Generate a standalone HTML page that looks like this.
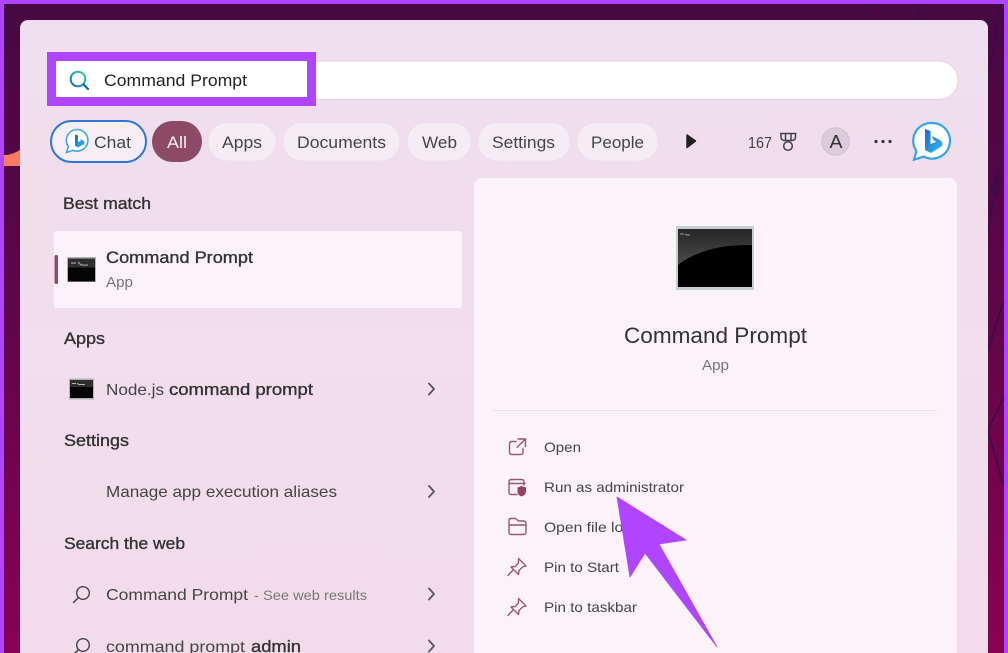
<!DOCTYPE html>
<html><head><meta charset="utf-8"><style>
html,body{margin:0;padding:0;background:#000}
svg{display:block}
text{font-family:"Liberation Sans",sans-serif;fill:#333}
.s{stroke:#333;stroke-width:.35px}
.g{font-size:16px;fill:#444}
.a{font-size:14px;fill:#444}
.i{fill:none;stroke:#96596f;stroke-width:1.4;stroke-linejoin:round;stroke-linecap:round}
.c{fill:none;stroke:#5a5a5a;stroke-width:1.9;stroke-linecap:round;stroke-linejoin:round}
</style></head><body>
<svg width="1008" height="653" viewBox="0 0 1008 653" xmlns="http://www.w3.org/2000/svg">
<defs>
<linearGradient id="bg" x1="0" y1="0" x2="0" y2="1"><stop offset="0" stop-color="#470842"/><stop offset=".4" stop-color="#5a0648"/><stop offset="1" stop-color="#870350"/></linearGradient>
<linearGradient id="panel" x1="0" y1="0" x2="0" y2="1"><stop offset="0" stop-color="#f0dfee"/><stop offset="1" stop-color="#f3dcea"/></linearGradient>
<linearGradient id="mag" x1="1" y1="0" x2="0" y2="1"><stop offset="0" stop-color="#3fd08f"/><stop offset=".5" stop-color="#1f9ac8"/><stop offset="1" stop-color="#0f62b0"/></linearGradient>
<linearGradient id="bing" x1="0" y1="0" x2="1" y2="1"><stop offset="0" stop-color="#1b62d8"/><stop offset="1" stop-color="#38bce8"/></linearGradient>
<linearGradient id="cmd" x1="0" y1="0" x2="0" y2="1"><stop offset="0" stop-color="#262626"/><stop offset="1" stop-color="#4a4a4a"/></linearGradient>
</defs>
<rect width="1008" height="653" fill="url(#bg)"/>
<path d="M4 155 Q12 155 20 150 V166 H4Z" fill="#fb7a62"/>
<g stroke="#3b0a4a" fill="none" stroke-width="1.6">
<path d="M993 200 L988 230"/><path d="M1004 300 L988 350"/><path d="M1004 397 L988 430 L1004 487"/>
<path d="M1000 4 L990 70 M865 4 L868 20 M920 4 L918 20"/>
</g>
<path d="M998 165 Q1004 180 996 200 L990 190Z" fill="#3f0a45"/>
<rect x="20" y="20" width="968" height="660" rx="8" fill="url(#panel)"/>
<rect x="0" y="0" width="1008" height="4" fill="#b045ff"/>
<rect x="0" y="0" width="4" height="653" fill="#b045ff"/>
<rect x="1004" y="0" width="4" height="653" fill="#b045ff"/>

<rect x="50" y="61" width="908" height="38.5" rx="19" fill="#fff" stroke="#e2d3de" stroke-width="1"/>
<rect x="51.500" y="56.500" width="260" height="45" fill="#fff" stroke="#b045ff" stroke-width="9"/>
<circle cx="78" cy="79" r="7.300" fill="none" stroke="url(#mag)" stroke-width="2"/>
<path d="M83.500 84.500 L88 89" stroke="#0f62b0" stroke-width="2.200" stroke-linecap="round"/>
<text x="104" y="86" font-size="17" textLength="143" lengthAdjust="spacingAndGlyphs" style="fill:#222">Command Prompt</text>

<rect x="51" y="121" width="95" height="41" rx="20.500" fill="#f6eef5" stroke="#2f76d6" stroke-width="2"/>
<path d="M77 129.500 a10.800 10.800 0 1 1 -4 20.800 l-6.500 2.200 l1.800 -6 A10.800 10.800 0 0 1 77 129.500Z" fill="#fff" stroke="#3fa4e6" stroke-width="1.600"/>
<path d="M75 134.500 L78 135.500 V142 L81 141 L79.500 139 L84 141 Q85 143 84 144 L78 147.500 L75 146Z" fill="url(#bing)"/>
<text x="94" y="148" font-size="17" textLength="37" lengthAdjust="spacingAndGlyphs" style="fill:#444">Chat</text>
<rect x="152" y="121" width="50" height="41" rx="20.500" fill="#8c4a65"/>
<text x="167" y="148" font-size="17" textLength="20" lengthAdjust="spacingAndGlyphs" style="fill:#fbeef5">All</text>
<g fill="#f6edf4" stroke="#ecdfe9" stroke-width="1">
<rect x="208" y="122.500" width="68" height="38.500" rx="19"/>
<rect x="283" y="122.500" width="117" height="38.500" rx="19"/>
<rect x="407" y="122.500" width="64" height="38.500" rx="19"/>
<rect x="478" y="122.500" width="92" height="38.500" rx="19"/>
<rect x="577" y="122.500" width="81" height="38.500" rx="19"/>
</g>
<text x="222" y="148" font-size="17" textLength="40" lengthAdjust="spacingAndGlyphs" style="fill:#444">Apps</text>
<text x="297" y="148" font-size="17" textLength="89" lengthAdjust="spacingAndGlyphs" style="fill:#444">Documents</text>
<text x="422" y="148" font-size="17" textLength="35" lengthAdjust="spacingAndGlyphs" style="fill:#444">Web</text>
<text x="492" y="148" font-size="17" textLength="63" lengthAdjust="spacingAndGlyphs" style="fill:#444">Settings</text>
<text x="591" y="148" font-size="17" textLength="53" lengthAdjust="spacingAndGlyphs" style="fill:#444">People</text>
<path d="M687 135 L695.500 141 L687 147.500 Z" fill="#222" stroke="#222" stroke-width="1.500" stroke-linejoin="round"/>
<text x="748" y="148" font-size="16" textLength="24" lengthAdjust="spacingAndGlyphs" style="fill:#444">167</text>
<g fill="none" stroke="#444" stroke-width="1.500"><path d="M780 133.500 H796.500 M781 133.500 V137 Q781 140.500 785 140.500 H791.500 Q795.500 140.500 795.500 137 V133.500 M785.500 133.500 V140.500 M791 133.500 V140.500"/><circle cx="788" cy="146" r="4.300"/></g>
<circle cx="835.500" cy="141.500" r="13.800" fill="#dccbd8" stroke="#d2c0cf"/>
<text x="829.500" y="148" font-size="18" textLength="13" lengthAdjust="spacingAndGlyphs" style="fill:#333">A</text>
<g fill="#333"><circle cx="876" cy="141.500" r="1.600"/><circle cx="883" cy="141.500" r="1.600"/><circle cx="890" cy="141.500" r="1.600"/></g>
<path d="M932 123 a17.800 17.800 0 1 1 -8 33.600 l-10 3 l2.500 -8.500 A17.800 17.800 0 0 1 932 123Z" fill="#fff" stroke="#38a3e8" stroke-width="2.200"/>
<path d="M925 129 L930.500 131 V144 L936 142 L933 139 L932 136 L940 140 Q943.500 142.500 942 146 L931 153 L925 150Z" fill="url(#bing)"/>

<rect x="474" y="178" width="483" height="490" rx="8" fill="#fbf3f9"/>
<rect x="54" y="231" width="408" height="77" rx="3" fill="#fbf3f9"/>
<rect x="54.500" y="255" width="3.500" height="29" rx="1.500" fill="#8c4a65"/>

<text x="63" y="209" font-size="16.500" textLength="88" lengthAdjust="spacingAndGlyphs" class="s">Best match</text>
<rect x="67" y="257" width="29" height="25" fill="#aeb4b4"/><rect x="68" y="258.500" width="27" height="23" fill="#050505"/><rect x="68" y="258.500" width="27" height="9" fill="#2e2e2e"/><path d="M71 263h5m2 -1l3 3h7" stroke="#b5b5b5" stroke-width="1" fill="none"/>
<text x="106" y="263" font-size="16.500" textLength="147" lengthAdjust="spacingAndGlyphs" class="s">Command Prompt</text>
<text x="106" y="287" font-size="14.500" textLength="27" lengthAdjust="spacingAndGlyphs" style="fill:#7a7278">App</text>

<text x="64" y="344" font-size="16.500" textLength="41" lengthAdjust="spacingAndGlyphs" class="s">Apps</text>
<rect x="69" y="378.500" width="25" height="21" fill="#aeb4b4"/><rect x="70" y="380" width="23" height="18" fill="#050505"/><rect x="70" y="380" width="23" height="7" fill="#2e2e2e"/><path d="M72 383.500h4m1 0l2 1h6" stroke="#b5b5b5" stroke-width="1" fill="none"/>
<text x="106" y="395" font-size="16.500" textLength="58" lengthAdjust="spacingAndGlyphs" class="g">Node.js</text>
<text x="169" y="395" font-size="16.500" textLength="144" lengthAdjust="spacingAndGlyphs" class="s">command prompt</text>
<path class="c" d="M429 383.500l5 5.500-5 5.500"/>

<text x="64" y="446" font-size="16.500" textLength="65" lengthAdjust="spacingAndGlyphs" class="s">Settings</text>
<text x="106" y="497" font-size="16.500" textLength="231" lengthAdjust="spacingAndGlyphs" class="g">Manage app execution aliases</text>
<path class="c" d="M429 486l5 5.500-5 5.500"/>

<text x="64" y="549" font-size="16.500" textLength="121" lengthAdjust="spacingAndGlyphs" class="s">Search the web</text>
<circle cx="83" cy="593" r="6.300" fill="none" stroke="#444" stroke-width="1.400"/><path d="M78.500 597.500L73.500 602.500" stroke="#444" stroke-width="1.500" stroke-linecap="round"/>
<text x="106" y="600" font-size="16.500" textLength="142" lengthAdjust="spacingAndGlyphs" class="g">Command Prompt</text>
<text x="254" y="600" font-size="14" style="fill:#777">-</text>
<text x="263" y="600" font-size="14" textLength="104" lengthAdjust="spacingAndGlyphs" style="fill:#777">See web results</text>
<path class="c" d="M429 588.500l5 5.500-5 5.500"/>
<circle cx="83" cy="645" r="6.300" fill="none" stroke="#444" stroke-width="1.400"/><path d="M78.500 649.500L73.500 654.500" stroke="#444" stroke-width="1.500" stroke-linecap="round"/>
<text x="106" y="652" font-size="16.500" textLength="139" lengthAdjust="spacingAndGlyphs" class="g">command prompt</text>
<text x="251" y="652" font-size="16.500" textLength="50" lengthAdjust="spacingAndGlyphs" class="s">admin</text>
<path class="c" d="M429 640.500l5 5.500-5 5.500"/>

<rect x="676" y="226" width="78" height="64" fill="#c5cdcf"/>
<rect x="678" y="229" width="74" height="58" fill="#000"/>
<path d="M678 229H752V245 Q705 244 678 265Z" fill="url(#cmd)"/>
<path d="M680 234h4m1 0l2 1h3" stroke="#999" stroke-width="1" fill="none"/>
<text x="624" y="343" font-size="22.500" textLength="183" lengthAdjust="spacingAndGlyphs" style="fill:#333">Command Prompt</text>
<text x="702" y="370" font-size="15" textLength="27" lengthAdjust="spacingAndGlyphs" style="fill:#7a7278">App</text>
<rect x="493" y="410" width="444" height="1" fill="#e9e0e7"/>

<path class="i" d="M516 441.500h-4q-2.500 0-2.500 2.500v8q0 2.500 2.500 2.500h8.500q2.500 0 2.500-2.500v-3.500M518 439h7.500v7.500M525 439.500l-8 8"/>
<text x="544" y="452" font-size="14.500" textLength="37" lengthAdjust="spacingAndGlyphs" class="a">Open</text>
<path class="i" d="M517 494.500h-5.500q-2.500 0-2.500-2.500v-10q0-2.500 2.500-2.500h10q2.500 0 2.500 2.500v3M509 483.500h16"/>
<path d="M517.500 487.500q3-1 4-1.500q1 .5 4.500 1.500v4q0 3.500-4.500 5q-4-1.500-4-5Z" fill="#96405f"/>
<text x="544" y="492" font-size="14.500" textLength="140" lengthAdjust="spacingAndGlyphs" class="a">Run as administrator</text>
<path class="i" d="M509 532v-11.500q0-2 2-2h4.500l3 2.500h5q2.500 0 2.500 2.500v8.500q0 2.500-2.500 2.500H511.500q-2.500 0-2.500-2.500ZM509 525h17"/>
<text x="544" y="532" font-size="14.500" textLength="121" lengthAdjust="spacingAndGlyphs" class="a">Open file location</text>
<path class="i" d="M518.500 558.500l7.500 7.500-3.500 1-3.500 3.500-.5 4-7.500-7.500 4-.5 3.500-3.500ZM512.500 570.500l-4.500 5"/>
<text x="544" y="572" font-size="14.500" textLength="75" lengthAdjust="spacingAndGlyphs" class="a">Pin to Start</text>
<path class="i" d="M518.500 598.500l7.500 7.500-3.500 1-3.500 3.500-.5 4-7.500-7.500 4-.5 3.500-3.500ZM512.500 610.500l-4.500 5"/>
<text x="544" y="612" font-size="14.500" textLength="93" lengthAdjust="spacingAndGlyphs" class="a">Pin to taskbar</text>

<path d="M617 497 L686 540 L659 544 L717 647 L645 553 L630 577 Z" fill="#b045ff" stroke="#b045ff" stroke-width=".8" stroke-linejoin="round"/>
</svg>
</body></html>
